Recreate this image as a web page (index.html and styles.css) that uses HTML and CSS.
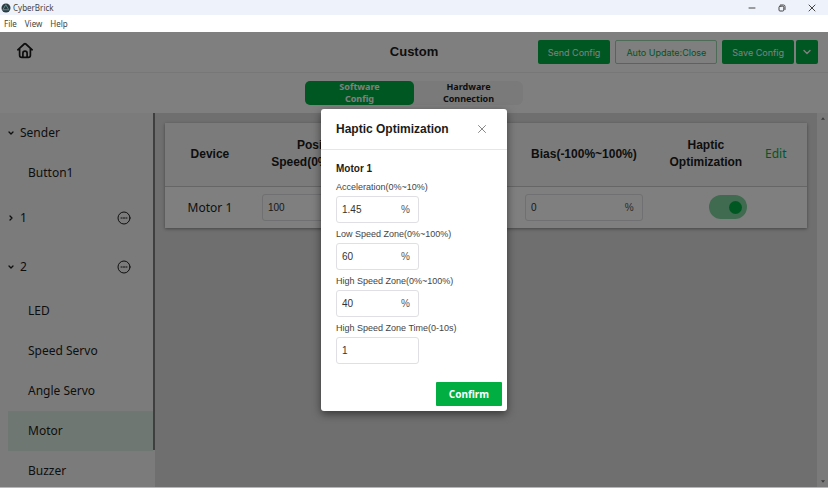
FILE: index.html
```html
<!DOCTYPE html>
<html lang="en">
<head>
<meta charset="utf-8">
<title>CyberBrick</title>
<link rel="stylesheet" href="styles.css">
</head>
<body>
<div class="window">
  <div class="titlebar">
    <svg class="logo" viewBox="0 0 10 10" aria-hidden="true"><circle cx="5" cy="5" r="4.5" fill="#2c3a40"/><path d="M5 2L7.8 6.8H2.2Z" fill="none" stroke="#5f8f90" stroke-width="1"/></svg>
    <span class="app-name">CyberBrick</span>
    <div class="controls">
      <button type="button" aria-label="Minimize"><svg viewBox="0 0 8 8"><path d="M1 4H7"/></svg></button>
      <button type="button" aria-label="Restore"><svg viewBox="0 0 8 8"><rect x="1" y="2.2" width="4.8" height="4.8" rx="1"/><path d="M2.5 1H5.5Q7 1 7 2.5V5.5"/></svg></button>
      <button type="button" aria-label="Close window"><svg viewBox="0 0 8 8"><path d="M1 1L7 7M7 1L1 7"/></svg></button>
    </div>
  </div>
  <nav class="menubar">
    <button type="button">File</button>
    <button type="button">View</button>
    <button type="button">Help</button>
  </nav>
  <div class="app">
    <header class="header">
      <div class="header-left">
        <button type="button" class="home" aria-label="Home"><svg viewBox="0 0 18 18"><path d="M1.8 8.8L8.2 3Q9 2.3 9.8 3L16.2 8.8M3.6 7.6V14.2Q3.6 16.4 5.8 16.4H12.2Q14.4 16.4 14.4 14.2V7.6M6.9 16.2V12.2Q6.9 10.2 9 10.2T11.1 12.2V16.2"/></svg></button>
      </div>
      <h1 class="title">Custom</h1>
      <div class="actions">
        <button type="button" class="btn solid">Send Config</button>
        <button type="button" class="btn outline">Auto Update:Close</button>
        <div class="split">
          <button type="button" class="btn solid save">Save Config</button>
          <button type="button" class="btn solid more" aria-label="More save options"><svg viewBox="0 0 8 8"><path d="M1 2.5L4 5.5L7 2.5"/></svg></button>
        </div>
      </div>
    </header>
    <div class="tabs-row">
      <div class="tabs">
        <button type="button" class="tab active">Software<br>Config</button>
        <button type="button" class="tab">Hardware<br>Connection</button>
      </div>
    </div>
    <div class="body">
      <aside class="sidebar">
        <div class="tree">
          <button type="button" class="node sender"><svg class="chev" viewBox="0 0 6 6"><path d="M1 2L3 4L5 2"/></svg>Sender</button>
          <button type="button" class="leaf">Button1</button>
          <div class="group">
            <button type="button" class="node"><svg class="chev" viewBox="0 0 6 6"><path d="M2 1L4 3L2 5"/></svg>1</button>
            <button type="button" class="dots" aria-label="Options for 1"><svg viewBox="0 0 14 14"><circle cx="7" cy="7" r="6"/><path d="M4 7H5.2M6.4 7H7.6M8.8 7H10"/></svg></button>
          </div>
          <div class="group">
            <button type="button" class="node"><svg class="chev" viewBox="0 0 6 6"><path d="M1 2L3 4L5 2"/></svg>2</button>
            <button type="button" class="dots" aria-label="Options for 2"><svg viewBox="0 0 14 14"><circle cx="7" cy="7" r="6"/><path d="M4 7H5.2M6.4 7H7.6M8.8 7H10"/></svg></button>
          </div>
          <button type="button" class="leaf">LED</button>
          <button type="button" class="leaf">Speed Servo</button>
          <button type="button" class="leaf">Angle Servo</button>
          <button type="button" class="leaf selected">Motor</button>
          <button type="button" class="leaf">Buzzer</button>
        </div>
        <div class="side-scroll"><div class="side-thumb"></div></div>
      </aside>
      <main class="main">
        <table class="card">
          <colgroup><col class="c-device"><col class="c-range"><col class="c-range"><col class="c-range"><col class="c-haptic"><col class="c-edit"></colgroup>
          <thead>
            <tr><th>Device</th><th>Position<br>Speed(0%~100%)</th><th></th><th>Bias(-100%~100%)</th><th>Haptic<br>Optimization</th><td class="edit-cell"><a href="#" class="edit">Edit</a></td></tr>
          </thead>
          <tbody>
            <tr>
              <td class="device">Motor 1</td>
              <td><label class="field"><input type="text" value="100" aria-label="Speed"></label></td>
              <td></td>
              <td><label class="field"><input type="text" value="0" aria-label="Bias"><span>%</span></label></td>
              <td class="toggle-cell" colspan="2"><input type="checkbox" class="toggle" checked aria-label="Haptic optimization"></td>
            </tr>
          </tbody>
        </table>
      </main>
      <div class="scrollbar">
        <svg viewBox="0 0 6 4"><path d="M0 4L3 0L6 4Z"/></svg>
        <svg viewBox="0 0 6 4"><path d="M0 0L3 4L6 0Z"/></svg>
      </div>
    </div>
    <div class="overlay">
      <section class="dialog" role="dialog" aria-labelledby="dialog-title">
        <div class="dialog-head">
          <h2 id="dialog-title">Haptic Optimization</h2>
          <button type="button" class="close" aria-label="Close"><svg viewBox="0 0 10 10"><path d="M1.5 1.5L8.5 8.5M8.5 1.5L1.5 8.5"/></svg></button>
        </div>
        <form class="dialog-body">
          <h3>Motor 1</h3>
          <label class="caption" for="accel">Acceleration(0%~10%)</label>
          <div class="field"><input type="text" id="accel" value="1.45"><span>%</span></div>
          <label class="caption" for="low">Low Speed Zone(0%~100%)</label>
          <div class="field"><input type="text" id="low" value="60"><span>%</span></div>
          <label class="caption" for="high">High Speed Zone(0%~100%)</label>
          <div class="field"><input type="text" id="high" value="40"><span>%</span></div>
          <label class="caption" for="time">High Speed Zone Time(0-10s)</label>
          <div class="field"><input type="text" id="time" value="1"></div>
        </form>
        <div class="dialog-foot"><button type="button" class="confirm">Confirm</button></div>
      </section>
    </div>
  </div>
</div>
</body>
</html>
```
FILE: styles.css
```css
* { box-sizing: border-box; }

body {
  margin: 0;
  font-family: "Liberation Sans", Arial, sans-serif;
  color: #1c1c1c;
}

button {
  border: 0;
  padding: 0;
  background: none;
  color: inherit;
  font: inherit;
}

svg {
  display: block;
  fill: none;
  stroke: currentColor;
  stroke-linecap: round;
  stroke-linejoin: round;
}

h1, h2, h3 { margin: 0; }

.window {
  display: flex;
  flex-direction: column;
  height: 100vh;
  border-bottom: 1px solid #b4b8bc;
}

.titlebar {
  display: flex;
  align-items: center;
  gap: 2px;
  height: 15px;
  padding: 0 12px 0 1px;
  background: #eef3fb;
  color: #444;
}
.logo { width: 10px; height: 10px; stroke: none; }
.app-name { font: 8px/14px "Noto Sans", sans-serif; }
.controls { display: flex; gap: 22px; margin-left: auto; }
.controls svg { width: 8px; height: 8px; }

.menubar {
  display: flex;
  gap: 8px;
  height: 17px;
  padding: 0 4px;
  background: #fff;
  font: 8px/17px "Noto Sans", sans-serif;
  color: #444;
}

.app {
  position: relative;
  display: flex;
  flex: 1;
  flex-direction: column;
  min-height: 0;
  background: #fff;
}

.header {
  display: grid;
  grid-template-columns: 1fr auto 1fr;
  align-items: center;
  height: 41px;
  padding: 0 10px;
  border-bottom: 1px solid #eee;
}
.header-left { padding-left: 6px; }
.home svg { width: 18px; height: 18px; stroke-width: 1.7; }
.title { font-size: 13px; line-height: 16px; }
.actions { display: flex; justify-content: flex-end; gap: 5px; }
.btn {
  height: 24px;
  padding: 0 10px;
  border-radius: 2px;
  font-family: Inter, sans-serif;
  font-size: 9px;
  white-space: nowrap;
}
.solid { background: #00ae42; color: #fff; }
.outline { border: 1px solid #9ad8b0; color: #00ae42; }
.split { display: flex; gap: 2px; }
.more { padding: 0 7px; }
.more svg { width: 8px; height: 8px; stroke-width: 1.4; }

.tabs-row {
  display: flex;
  justify-content: center;
  padding: 8px 0;
}
.tabs {
  display: grid;
  grid-template-columns: 1fr 1fr;
  width: 218px;
  border-radius: 6px;
  background: #f4f4f4;
}
.tab {
  height: 24px;
  border-radius: 5px;
  font: bold 9px/12px "Noto Sans", sans-serif;
}
.tab.active { background: #00ae42; color: #fff; }

.body { display: flex; flex: 1; min-height: 0; }

.sidebar {
  display: flex;
  width: 155px;
  overflow: hidden;
  background: #f7f7f7;
  font: 12px/16px "Noto Sans", sans-serif;
}
.tree { flex: 1; padding-left: 8px; }
.node {
  display: flex;
  align-items: center;
  gap: 6px;
  height: 40px;
  text-align: left;
}
.chev { width: 6px; height: 6px; stroke-width: 1.3; }
.leaf {
  display: block;
  width: 100%;
  height: 40px;
  padding-left: 20px;
  text-align: left;
}
.selected { background: #dfeee4; }
.group {
  display: flex;
  align-items: center;
  justify-content: space-between;
  height: 49px;
  padding-right: 22px;
}
.dots svg { width: 14px; height: 14px; }
.side-scroll { width: 2px; }
.side-thumb { height: 90%; background: #7f7f7f; }

.main {
  flex: 1;
  padding: 10px;
  background: #dedede;
}
.card {
  width: 100%;
  table-layout: fixed;
  border-collapse: collapse;
  background: #fff;
  box-shadow: 0 1px 3px #888;
  font-size: 12px;
  line-height: 17px;
}
.c-device { width: 14%; }
.c-range { width: 20.5%; }
.c-haptic { width: 17.5%; }
.card th, .card td { padding: 0 7px; text-align: center; }
.card thead { background: #f6f6f6; }
.card thead tr { height: 63px; border-bottom: 1px solid #ccc; }
.card tbody tr { height: 42px; }
.card .edit-cell { padding: 0 3px; text-align: left; }
.device, .edit { font-family: "Noto Sans", sans-serif; }
.edit { color: #00ae42; text-decoration: none; }
.toggle {
  appearance: none;
  display: block;
  width: 38px;
  height: 24px;
  margin: 0 auto;
  padding: 6px 5px;
  border-radius: 12px;
  background: #80d6a0;
}
.toggle::before {
  content: "";
  display: block;
  width: 13px;
  height: 13px;
  margin-left: auto;
  border-radius: 50%;
  background: #00ae42;
}

.field {
  display: flex;
  align-items: center;
  height: 27px;
  padding: 0 8px 0 5px;
  border: 1px solid #e0dfe3;
  border-radius: 3px;
  color: #555;
  font-size: 10px;
}
.field input {
  flex: 1;
  min-width: 0;
  padding: 0;
  border: 0;
  outline: 0;
  background: none;
  color: #333;
  font: inherit;
}

.scrollbar {
  display: flex;
  flex-direction: column;
  align-items: center;
  justify-content: space-between;
  width: 11px;
  padding: 4px 0;
  background: #f5f5f5;
}
.scrollbar svg { width: 4px; height: 3px; fill: #777; stroke: none; }

.overlay {
  position: absolute;
  inset: 0;
  display: grid;
  place-items: center;
  background: rgba(0, 0, 0, 0.5);
}
.dialog {
  width: 186px;
  border-radius: 3px;
  background: #fff;
  box-shadow: 0 3px 8px rgba(0, 0, 0, 0.5);
}
.dialog-head {
  display: flex;
  align-items: center;
  justify-content: space-between;
  height: 41px;
  padding: 0 20px 0 15px;
  border-bottom: 1px solid #e6e6e6;
}
.dialog-head h2 { font-size: 12px; line-height: 16px; }
.close { color: #888; }
.close svg { width: 10px; height: 10px; }
.dialog-body { padding: 11px 15px 18px; }
.dialog-body h3 { font-size: 10px; line-height: 15px; }
.caption {
  display: block;
  height: 20px;
  color: #444;
  font-size: 9px;
  line-height: 22px;
}
.dialog-body .field { width: 83px; }
.dialog-foot {
  display: flex;
  justify-content: flex-end;
  padding: 0 5px 5px;
}
.confirm {
  height: 24px;
  padding: 0 13px;
  border-radius: 1px;
  background: #00ae42;
  color: #fff;
  font: bold 10px/16px "Noto Sans", sans-serif;
}
```
